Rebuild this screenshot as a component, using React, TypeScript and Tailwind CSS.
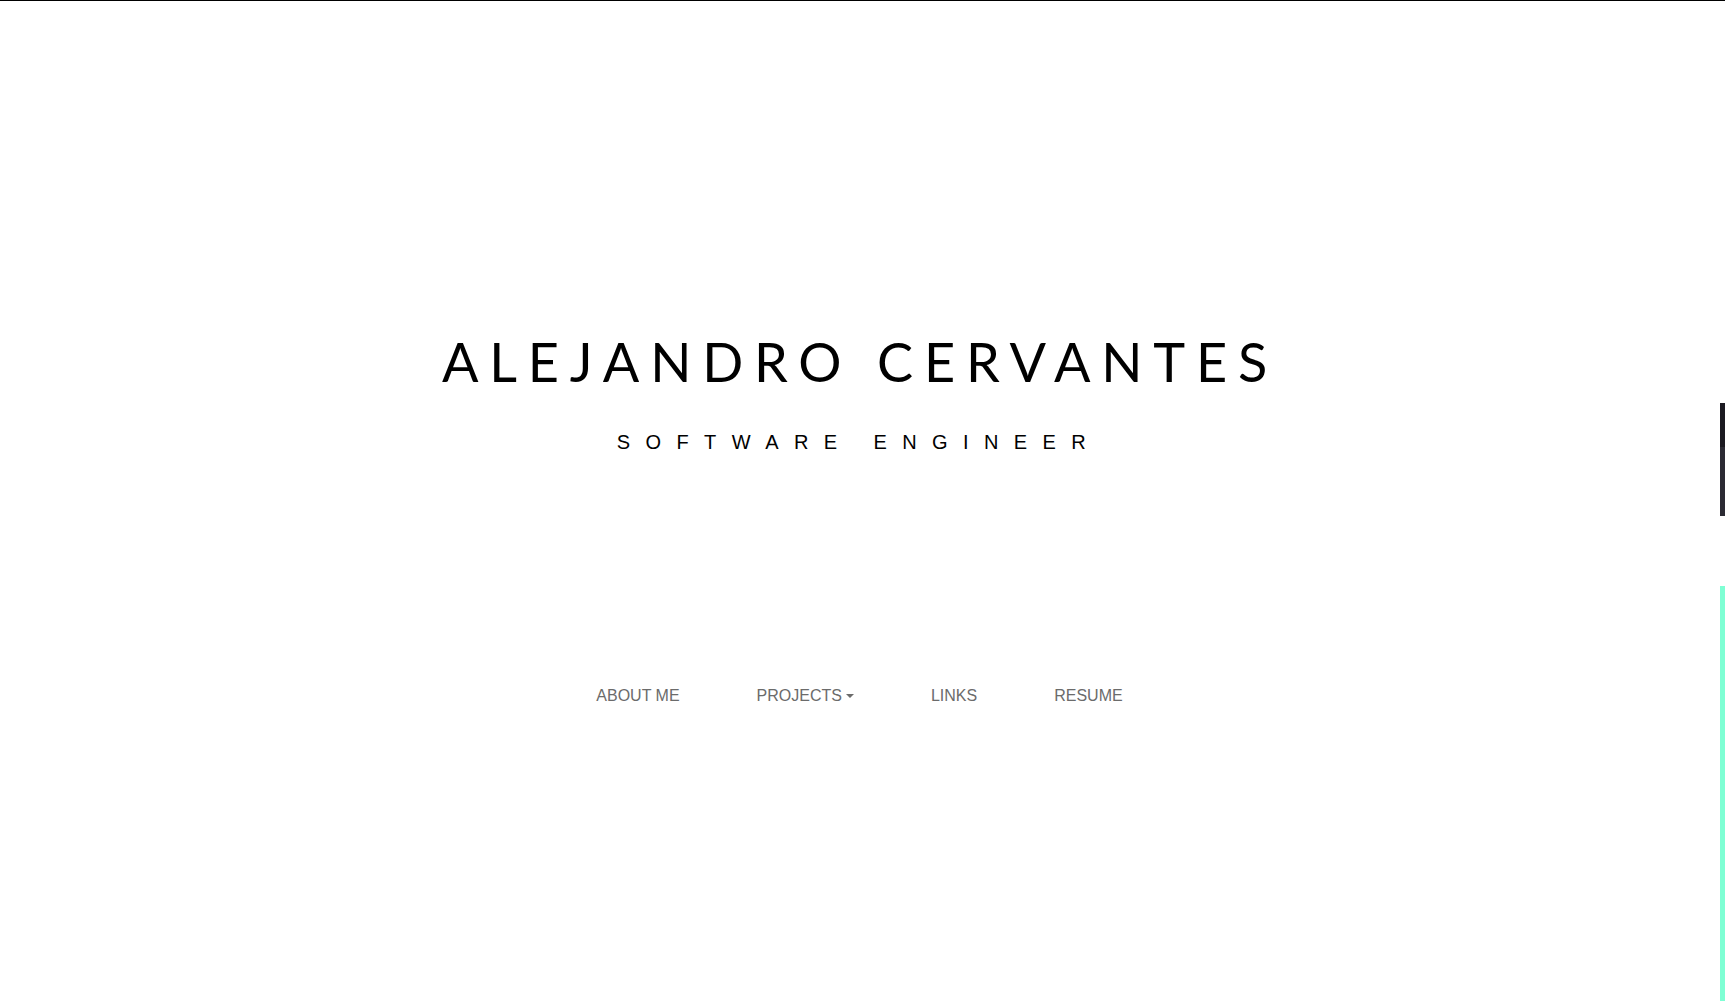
import React from 'react';

const navItems = ['ABOUT ME', 'PROJECTS', 'LINKS', 'RESUME'];

const App: React.FC = () => {
  return (
    <div className="relative h-[1001px] overflow-hidden border-t border-black bg-white">
      <header className="flex flex-col items-center pt-[334px]">
        <h1 className="mr-[5px] font-['Lato',sans-serif] text-[54px] font-normal leading-none tracking-[0.2em] text-black">
          ALEJANDRO CERVANTES
        </h1>
        <p className="mr-[7px] mt-[43px] font-['Liberation_Sans',Arial,sans-serif] text-[20px] leading-none tracking-[0.77em] text-black">
          SOFTWARE ENGINEER
        </p>
      </header>

      <nav className="mt-[236px] flex justify-center pr-[6px]">
        <ul className="flex">
          {navItems.map((item) => (
            <li key={item}>
              <a
                href="#"
                className="flex items-center px-[38.5px] font-['Liberation_Sans',Arial,sans-serif] text-[16px] leading-none text-[#6b6b6b]"
              >
                {item}
                {item === 'PROJECTS' && (
                  <span className="ml-[4px] inline-block h-0 w-0 border-x-[4px] border-t-[4px] border-x-transparent border-t-[#6b6b6b]" />
                )}
              </a>
            </li>
          ))}
        </ul>
      </nav>

      {/* side indicators */}
      <div className="absolute right-0 top-[402px] flex w-[5px] flex-col">
        <div className="h-[44px] bg-[#1b1a21]" />
        <div className="h-[69px] bg-[#2b2a33]" />
      </div>
      <div className="absolute bottom-0 right-0 top-[585px] w-[5px] bg-[#7fffd4]" />
    </div>
  );
};

export default App;
